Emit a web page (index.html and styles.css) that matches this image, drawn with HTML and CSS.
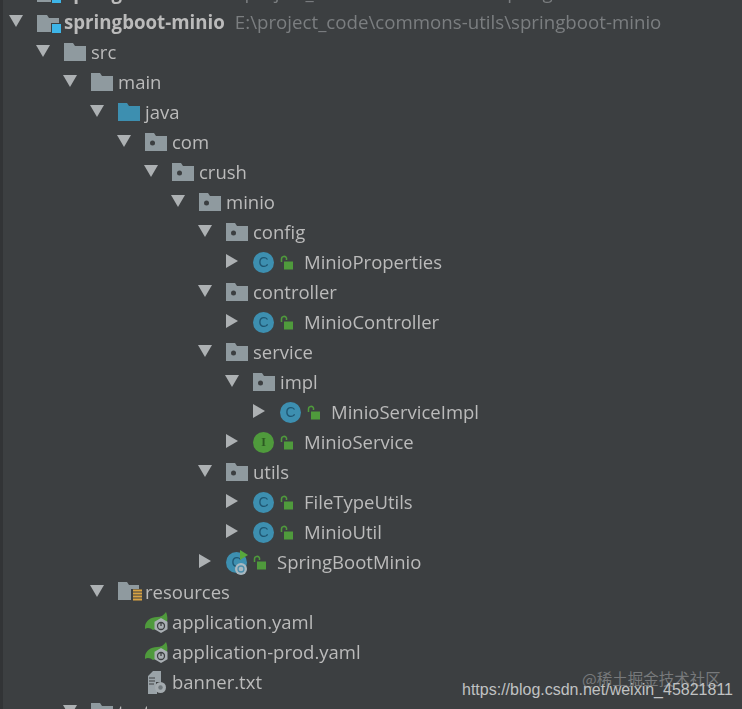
FILE: index.html
```html
<!DOCTYPE html>
<html lang="en">
<head>
  <meta charset="UTF-8" />
  <meta name="viewport" content="width=device-width, initial-scale=1.0"/>
  <title>Project tree</title>
  <link rel="stylesheet" href="styles.css">
</head>
<body>
  <svg class="defs" width="0" height="0">
    <symbol id="arrow-down" viewBox="0 0 14 12"><path d="M0 0H14L7 12Z"/></symbol>
    <symbol id="arrow-right" viewBox="0 0 12 14"><path d="M0 0L12 7L0 14Z"/></symbol>
    <symbol id="folder" viewBox="0 0 22 18"><path d="M0 0H9L11 3H22V18H0Z"/></symbol>
    <symbol id="package" viewBox="0 0 22 18"><path d="M0 0H9L11 3H22V18H0Z"/><circle cx="7.500" cy="10" r="2.500" fill="#3c3f41"/></symbol>
    <symbol id="project" viewBox="0 0 24 21"><path d="M0 0H10L12 3H22V8H14V17H0Z" transform="translate(0 3)"/><rect x="15" y="12" width="9" height="9" fill="#3db5e8"/></symbol>
    <symbol id="resources" viewBox="0 0 24 20"><path d="M0 0H9L11 3H21V7H13V18H0Z"/><path d="M15 8.500H24M15 11.500H24M15 14.500H24M15 17.500H24" stroke="#d9a343" stroke-width="1.800"/></symbol>
    <symbol id="lock" viewBox="0 0 13 15"><path d="M4 6.500H13V14.500H4Z" fill="#4f9a3c"/><path d="M1.500 7V4A2.600 2.600 0 0 1 6.500 3V5" fill="none" stroke="#4f9a3c" stroke-width="1.500"/></symbol>
    <symbol id="spring" viewBox="0 0 24 21"><path d="M0 15C0 9 6 5 12 5C16 5 19 3 21 0C23 5 23 10 20 14L8 18C6 16 2 15 0 17Z" fill="#4f9a3c"/><path d="M16 6L22.500 9.800V17.200L16 21L9.500 17.200V9.800Z" fill="#a9afb3"/><circle cx="16" cy="14" r="3.500" fill="none" stroke="#3c3f41" stroke-width="1.300"/><path d="M16 10.500V14" stroke="#3c3f41" stroke-width="1.300"/></symbol>
    <symbol id="textfile" viewBox="0 0 18 23"><path d="M5 0H13V11H8V17H0V5Z" fill="#9aa3a8"/><path d="M1 7H7M1 10H7M1 13H6" stroke="#3c3f41"/><path d="M0 14H9V23H0Z" fill="#9aa3a8"/><circle cx="12.500" cy="16.500" r="5.500" fill="#a4abaf"/><circle cx="12.500" cy="16.500" r="2.200" fill="#6f777b"/></symbol>
    <symbol id="boot-overlay" viewBox="0 0 26 26"><path d="M14 0L22 5L14 10Z" fill="#58a83c"/><circle cx="15" cy="19" r="6" fill="#a9b8c0"/><circle cx="15" cy="19" r="3" fill="none" stroke="#4d90ad" stroke-width="1.300"/></symbol>
  </svg>

  <ul class="tree">
    <li>
      <div class="row">
        <span class="arrow"></span>
        <span class="icon-box"><svg class="ico-project"><use href="#project"/></svg></span>
        <b class="name">springboot-mail</b><span class="path">E:\project_code\commons-utils\springboot-mail</span>
      </div>
    </li>
    <li>
      <div class="row">
        <span class="arrow"><svg class="ico-down"><use href="#arrow-down"/></svg></span>
        <span class="icon-box"><svg class="ico-project"><use href="#project"/></svg></span>
        <b class="name">springboot-minio</b><span class="path">E:\project_code\commons-utils\springboot-minio</span>
      </div>
      <ul>
        <li>
          <div class="row">
            <span class="arrow"><svg class="ico-down"><use href="#arrow-down"/></svg></span>
            <span class="icon-box"><svg class="ico-folder"><use href="#folder"/></svg></span>
            <span class="name">src</span>
          </div>
          <ul>
            <li>
              <div class="row">
                <span class="arrow"><svg class="ico-down"><use href="#arrow-down"/></svg></span>
                <span class="icon-box"><svg class="ico-folder"><use href="#folder"/></svg></span>
                <span class="name">main</span>
              </div>
              <ul>
                <li>
                  <div class="row">
                    <span class="arrow"><svg class="ico-down"><use href="#arrow-down"/></svg></span>
                    <span class="icon-box"><svg class="ico-folder source"><use href="#folder"/></svg></span>
                    <span class="name">java</span>
                  </div>
                  <ul>
                    <li>
                      <div class="row">
                        <span class="arrow"><svg class="ico-down"><use href="#arrow-down"/></svg></span>
                        <span class="icon-box"><svg class="ico-folder"><use href="#package"/></svg></span>
                        <span class="name">com</span>
                      </div>
                      <ul>
                        <li>
                          <div class="row">
                            <span class="arrow"><svg class="ico-down"><use href="#arrow-down"/></svg></span>
                            <span class="icon-box"><svg class="ico-folder"><use href="#package"/></svg></span>
                            <span class="name">crush</span>
                          </div>
                          <ul>
                            <li>
                              <div class="row">
                                <span class="arrow"><svg class="ico-down"><use href="#arrow-down"/></svg></span>
                                <span class="icon-box"><svg class="ico-folder"><use href="#package"/></svg></span>
                                <span class="name">minio</span>
                              </div>
                              <ul>
                                <li>
                                  <div class="row">
                                    <span class="arrow"><svg class="ico-down"><use href="#arrow-down"/></svg></span>
                                    <span class="icon-box"><svg class="ico-folder"><use href="#package"/></svg></span>
                                    <span class="name">config</span>
                                  </div>
                                  <ul>
                                    <li>
                                      <div class="row">
                                        <span class="arrow"><svg class="ico-right"><use href="#arrow-right"/></svg></span>
                                        <span class="class-box"><span class="badge">C</span><svg class="ico-lock"><use href="#lock"/></svg></span>
                                        <span class="name">MinioProperties</span>
                                      </div>
                                    </li>
                                  </ul>
                                </li>
                                <li>
                                  <div class="row">
                                    <span class="arrow"><svg class="ico-down"><use href="#arrow-down"/></svg></span>
                                    <span class="icon-box"><svg class="ico-folder"><use href="#package"/></svg></span>
                                    <span class="name">controller</span>
                                  </div>
                                  <ul>
                                    <li>
                                      <div class="row">
                                        <span class="arrow"><svg class="ico-right"><use href="#arrow-right"/></svg></span>
                                        <span class="class-box"><span class="badge">C</span><svg class="ico-lock"><use href="#lock"/></svg></span>
                                        <span class="name">MinioController</span>
                                      </div>
                                    </li>
                                  </ul>
                                </li>
                                <li>
                                  <div class="row">
                                    <span class="arrow"><svg class="ico-down"><use href="#arrow-down"/></svg></span>
                                    <span class="icon-box"><svg class="ico-folder"><use href="#package"/></svg></span>
                                    <span class="name">service</span>
                                  </div>
                                  <ul>
                                    <li>
                                      <div class="row">
                                        <span class="arrow"><svg class="ico-down"><use href="#arrow-down"/></svg></span>
                                        <span class="icon-box"><svg class="ico-folder"><use href="#package"/></svg></span>
                                        <span class="name">impl</span>
                                      </div>
                                      <ul>
                                        <li>
                                          <div class="row">
                                            <span class="arrow"><svg class="ico-right"><use href="#arrow-right"/></svg></span>
                                            <span class="class-box"><span class="badge">C</span><svg class="ico-lock"><use href="#lock"/></svg></span>
                                            <span class="name">MinioServiceImpl</span>
                                          </div>
                                        </li>
                                      </ul>
                                    </li>
                                    <li>
                                      <div class="row">
                                        <span class="arrow"><svg class="ico-right"><use href="#arrow-right"/></svg></span>
                                        <span class="class-box"><span class="badge interface">I</span><svg class="ico-lock"><use href="#lock"/></svg></span>
                                        <span class="name">MinioService</span>
                                      </div>
                                    </li>
                                  </ul>
                                </li>
                                <li>
                                  <div class="row">
                                    <span class="arrow"><svg class="ico-down"><use href="#arrow-down"/></svg></span>
                                    <span class="icon-box"><svg class="ico-folder"><use href="#package"/></svg></span>
                                    <span class="name">utils</span>
                                  </div>
                                  <ul>
                                    <li>
                                      <div class="row">
                                        <span class="arrow"><svg class="ico-right"><use href="#arrow-right"/></svg></span>
                                        <span class="class-box"><span class="badge">C</span><svg class="ico-lock"><use href="#lock"/></svg></span>
                                        <span class="name">FileTypeUtils</span>
                                      </div>
                                    </li>
                                    <li>
                                      <div class="row">
                                        <span class="arrow"><svg class="ico-right"><use href="#arrow-right"/></svg></span>
                                        <span class="class-box"><span class="badge">C</span><svg class="ico-lock"><use href="#lock"/></svg></span>
                                        <span class="name">MinioUtil</span>
                                      </div>
                                    </li>
                                  </ul>
                                </li>
                                <li>
                                  <div class="row">
                                    <span class="arrow"><svg class="ico-right"><use href="#arrow-right"/></svg></span>
                                    <span class="class-box"><span class="badge">C<svg class="ico-overlay"><use href="#boot-overlay"/></svg></span><svg class="ico-lock"><use href="#lock"/></svg></span>
                                    <span class="name">SpringBootMinio</span>
                                  </div>
                                </li>
                              </ul>
                            </li>
                          </ul>
                        </li>
                      </ul>
                    </li>
                  </ul>
                </li>
                <li>
                  <div class="row">
                    <span class="arrow"><svg class="ico-down"><use href="#arrow-down"/></svg></span>
                    <span class="icon-box"><svg class="ico-resources"><use href="#resources"/></svg></span>
                    <span class="name">resources</span>
                  </div>
                  <ul>
                    <li>
                      <div class="row">
                        <span class="arrow"></span>
                        <span class="icon-box"><svg class="ico-spring"><use href="#spring"/></svg></span>
                        <span class="name">application.yaml</span>
                      </div>
                    </li>
                    <li>
                      <div class="row">
                        <span class="arrow"></span>
                        <span class="icon-box"><svg class="ico-spring"><use href="#spring"/></svg></span>
                        <span class="name">application-prod.yaml</span>
                      </div>
                    </li>
                    <li>
                      <div class="row">
                        <span class="arrow"></span>
                        <span class="icon-box"><svg class="ico-text"><use href="#textfile"/></svg></span>
                        <span class="name">banner.txt</span>
                      </div>
                    </li>
                  </ul>
                </li>
              </ul>
            </li>
            <li>
              <div class="row">
                <span class="arrow"><svg class="ico-down"><use href="#arrow-down"/></svg></span>
                <span class="icon-box"><svg class="ico-folder"><use href="#folder"/></svg></span>
                <span class="name">test</span>
              </div>
            </li>
          </ul>
        </li>
      </ul>
    </li>
  </ul>

  <div class="watermark">
    <div class="mark-juejin">@稀土掘金技术社区</div>
    <div class="mark-csdn">https://blog.csdn.net/weixin_45821811</div>
  </div>
</body>
</html>
```

FILE: styles.css
```css
html, body {
    height: 709px;
    overflow: hidden;
}

body {
    position: relative;
    margin: 0;
    background-color: #3c3f41;
    color: #bbbbbb;
    font-family: "Open Sans", "Noto Sans", sans-serif;
    font-size: 18.5px;
    border-left: 3px solid #323436;
    box-sizing: border-box;
}

.defs {
    position: absolute;
}

ul {
    list-style: none;
    margin: 0;
    padding: 0 0 0 27px;
}

.tree {
    margin-top: -23px;
    padding-left: 0;
    filter: blur(0.4px);
}

.row {
    display: flex;
    align-items: center;
    height: 30px;
    white-space: nowrap;
}

.arrow {
    flex: none;
    display: flex;
    justify-content: center;
    width: 26px;
    margin-right: 1px;
    margin-bottom: 2px;
    fill: #adb1b3;
}

.icon-box {
    flex: none;
    display: flex;
    align-items: center;
    width: 27px;
    margin-left: 7px;
}

.class-box {
    flex: none;
    display: flex;
    align-items: center;
    gap: 6px;
    width: 51px;
    margin-left: 7px;
}

.name {
    margin-bottom: 2px;
    color: #bbbbbb;
}

b.name {
    font-weight: 700;
    font-size: 18.7px;
}

.path {
    margin-left: 10px;
    margin-bottom: 2px;
    font-size: 18.7px;
    color: #7b7e80;
}

.ico-down {
    width: 14px;
    height: 12px;
}

.ico-right {
    width: 12px;
    height: 14px;
}

.ico-folder {
    width: 22px;
    height: 18px;
    fill: #8f9a9f;
}

.ico-folder.source {
    fill: #3d8fb0;
}

.ico-project {
    width: 24px;
    height: 21px;
    fill: #8f9a9f;
}

.ico-resources {
    width: 24px;
    height: 20px;
    fill: #8f9a9f;
}

.ico-spring {
    width: 24px;
    height: 21px;
}

.ico-text {
    width: 18px;
    height: 23px;
    margin-left: 3px;
}

.ico-lock {
    width: 13px;
    height: 15px;
}

.badge {
    position: relative;
    flex: none;
    width: 21px;
    height: 21px;
    border-radius: 50%;
    background-color: #3d8fb0;
    color: #1f5672;
    font-family: "Liberation Sans", sans-serif;
    font-size: 14px;
    line-height: 21px;
    text-align: center;
}

.badge.interface {
    background-color: #4f9a3c;
    color: #2c5a22;
    font-family: "Liberation Serif", serif;
    font-weight: 700;
    font-size: 12px;
}

.ico-overlay {
    position: absolute;
    left: 0;
    top: -2px;
    width: 26px;
    height: 26px;
}

.watermark {
    position: absolute;
    right: 0;
    bottom: 0;
    width: 280px;
    height: 50px;
}

.mark-juejin {
    position: absolute;
    left: 0;
    top: 8px;
    padding-left: 120px;
    font-family: "Noto Sans CJK SC", sans-serif;
    font-size: 15.5px;
    color: #77797b;
}

.mark-csdn {
    position: absolute;
    left: 0;
    top: 22px;
    font-family: "Liberation Sans", sans-serif;
    font-size: 16px;
    color: #c0c2c3;
}
```
